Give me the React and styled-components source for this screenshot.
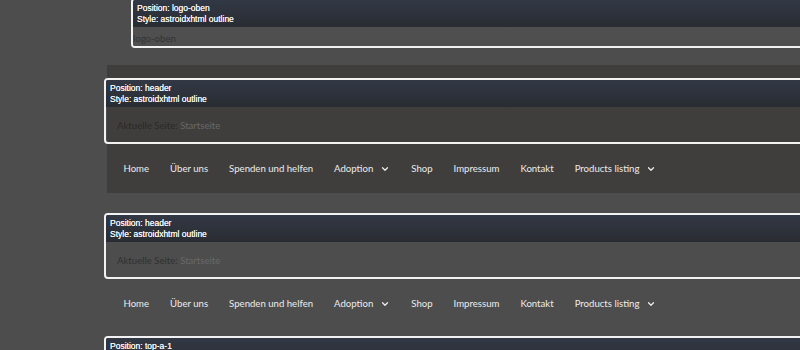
import styled, { createGlobalStyle } from "styled-components";
import { FiChevronDown } from "react-icons/fi";

const GlobalStyle = createGlobalStyle`
  body {
    margin: 0;
    background: #4d4d4d;
    overflow: hidden;
  }
`;

const menu = [
  { label: "Home" },
  { label: "Über uns" },
  { label: "Spenden und helfen" },
  { label: "Adoption", sub: true },
  { label: "Shop" },
  { label: "Impressum" },
  { label: "Kontakt" },
  { label: "Products listing", sub: true },
];

function Module({ position, children, indent, top, gap }) {
  return (
    <Box indent={indent} top={top} gap={gap}>
      <BoxHead>
        <div>Position: {position}</div>
        <div>Style: astroidxhtml outline</div>
      </BoxHead>
      {children}
    </Box>
  );
}

function Breadcrumb({ dim }) {
  return (
    <Crumbs>
      <CrumbLabel dim={dim}>Aktuelle Seite: </CrumbLabel>
      <CrumbLink>Startseite</CrumbLink>
    </Crumbs>
  );
}

function Menu() {
  return (
    <Nav>
      {menu.map((item) => (
        <NavItem key={item.label}>
          {item.label}
          {item.sub && <FiChevronDown />}
        </NavItem>
      ))}
    </Nav>
  );
}

export default function App() {
  return (
    <>
      <GlobalStyle />
      <Page>
        <Module position="logo-oben" indent top>
          <LogoBody>logo-oben</LogoBody>
        </Module>
        <HeaderBand>
          <Module position="header">
            <Breadcrumb dim />
          </Module>
          <Menu />
        </HeaderBand>
        <Section>
          <Module position="header">
            <Breadcrumb />
          </Module>
          <Menu />
          <Module position="top-a-1" gap>
            <LogoBody />
          </Module>
        </Section>
      </Page>
    </>
  );
}

const Page = styled.div`
  padding-left: 107px;
  width: 1000px;
  display: flex;
  flex-direction: column;
`;

const Box = styled.div`
  margin-left: ${(p) => (p.indent ? "24px" : "-3px")};
  margin-top: ${(p) => (p.top ? "-2px" : p.gap ? "8px" : "0")};
  border: 2px solid #f2f2f2;
  border-radius: 4px;
  overflow: hidden;
`;

const BoxHead = styled.div`
  background: linear-gradient(#323845, #292c32);
  color: #f4f4f4;
  font-family: "Liberation Sans", Arial, sans-serif;
  font-size: 8.5px;
  line-height: 11px;
  padding: 3px 4px 2px;
  height: 22px;
  text-shadow: 0 0 0.4px #fff;
`;

const LogoBody = styled.div`
  background: #4f4f4f;
  height: 19px;
  padding-top: 5px;
  box-sizing: border-box;
  font-family: Lato, sans-serif;
  font-size: 9.6px;
  line-height: 13px;
  color: #333333;
`;

const HeaderBand = styled.div`
  margin-top: 17px;
  background: #403e3c;
  padding-top: 13px;
`;

const Section = styled.div`
  padding-top: 20px;
  display: flex;
  flex-direction: column;
`;

const Crumbs = styled.div`
  height: 35px;
  display: flex;
  align-items: center;
  padding-left: 11px;
  padding-top: 2px;
  box-sizing: border-box;
  font-family: Lato, sans-serif;
  font-size: 9.6px;
  white-space: pre;
`;

const CrumbLabel = styled.span`
  color: ${(p) => (p.dim ? "#2a2928" : "#303030")};
`;

const CrumbLink = styled.span`
  color: #686868;
`;

const Nav = styled.nav`
  height: 49px;
  display: flex;
  align-items: center;
  padding-left: 6px;
  font-family: Lato, sans-serif;
  font-size: 9.6px;
  color: #ececec;
`;

const NavItem = styled.div`
  display: flex;
  align-items: center;
  padding: 0 10.5px;
  white-space: nowrap;
  svg {
    width: 10px;
    height: 10px;
    margin-left: 7px;
    stroke-width: 3;
  }
`;
